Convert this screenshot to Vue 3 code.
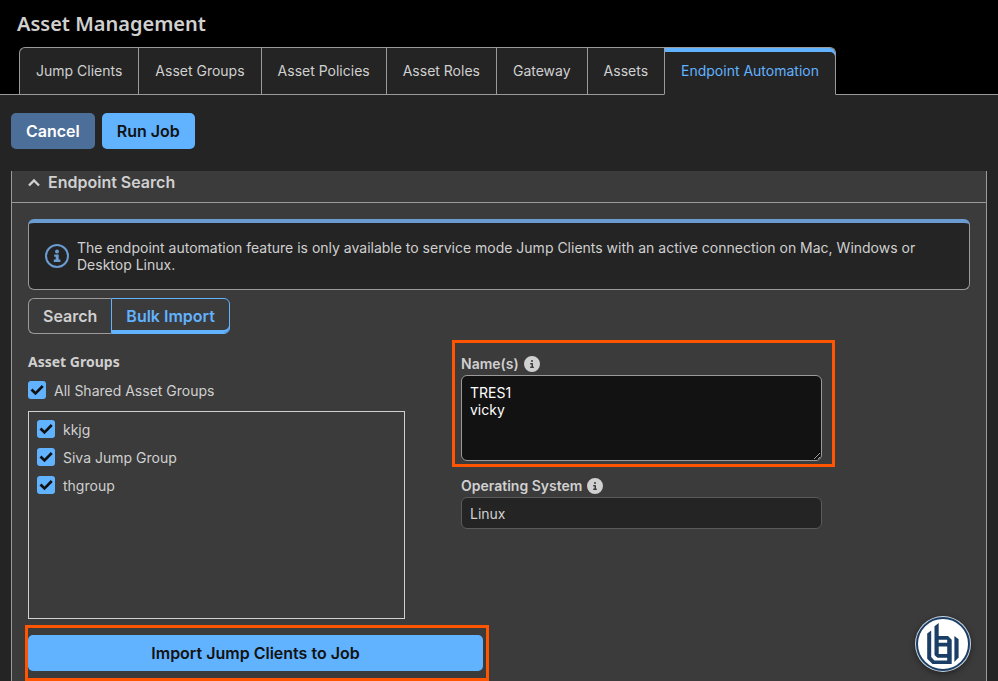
<script setup>
import { ref, computed } from 'vue'

const tabs = ['Jump Clients', 'Asset Groups', 'Asset Policies', 'Asset Roles', 'Gateway', 'Assets', 'Endpoint Automation']
const activeTab = ref('Endpoint Automation')
const mode = ref('Bulk Import')
const names = ref('TRES1\nvicky')
const os = ref('Linux')
const groups = ref([
  { id: 'g1', name: 'kkjg', checked: true },
  { id: 'g2', name: 'Siva Jump Group', checked: true },
  { id: 'g3', name: 'thgroup', checked: true },
])
const allChecked = computed({
  get: () => groups.value.every((g) => g.checked),
  set: (v) => groups.value.forEach((g) => { g.checked = v }),
})
const infoPath = 'M256 512A256 256 0 1 0 256 0a256 256 0 1 0 0 512zM216 336h24V272H216c-13.3 0-24-10.7-24-24s10.7-24 24-24h48c13.3 0 24 10.7 24 24v88h8c13.3 0 24 10.7 24 24s-10.7 24-24 24H216c-13.3 0-24-10.7-24-24s10.7-24 24-24zm40-208a32 32 0 1 1 0 64 32 32 0 1 1 0-64z'
</script>

<template>
  <div class="page">
    <header class="top">
      <h1>Asset Management</h1>
      <nav class="tabs">
        <a v-for="t in tabs" :key="t" href="#" class="tab" :class="{ active: t === activeTab }" @click.prevent="activeTab = t">{{ t }}</a>
      </nav>
    </header>

    <div class="toolbar">
      <button type="button" class="btn cancel">Cancel</button>
      <button type="button" class="btn primary">Run Job</button>
    </div>

    <main class="panel">
      <h2 class="panel-head">
        <svg class="chevron" viewBox="0 0 12 10" aria-hidden="true"><path d="M1 7.500l5-5 5 5" /></svg>
        Endpoint Search
      </h2>
      <div class="panel-body">
        <div class="alert">
          <svg class="alert-icon" viewBox="0 0 24 24" aria-hidden="true">
            <circle cx="12" cy="12" r="11" />
            <circle class="fill" cx="12" cy="7.6" r="2" />
            <path class="fill" d="M9.2 10.4h4.500v5.200h1.700V18H8.800v-2.400h1.900v-2.800H9.200z" />
          </svg>
          <p>The endpoint automation feature is only available to service mode Jump Clients with an active connection on Mac, Windows or Desktop Linux.</p>
        </div>

        <div class="segments">
          <button type="button" class="segment" :class="{ on: mode === 'Search' }" @click="mode = 'Search'">Search</button>
          <button type="button" class="segment" :class="{ on: mode === 'Bulk Import' }" @click="mode = 'Bulk Import'">Bulk Import</button>
        </div>

        <div class="columns">
          <section class="groups">
            <h3>Asset Groups</h3>
            <label class="check" for="all"><input id="all" v-model="allChecked" type="checkbox" />All Shared Asset Groups</label>
            <div class="list">
              <label v-for="g in groups" :key="g.id" class="check" :for="g.id"><input :id="g.id" v-model="g.checked" type="checkbox" />{{ g.name }}</label>
            </div>
          </section>

          <section class="fields">
            <div class="field highlighted">
              <label for="names">Name(s)<svg viewBox="0 0 512 512" aria-hidden="true"><path :d="infoPath" /></svg></label>
              <textarea id="names" v-model="names" spellcheck="false"></textarea>
            </div>
            <div class="field">
              <label for="os">Operating System<svg viewBox="0 0 512 512" aria-hidden="true"><path :d="infoPath" /></svg></label>
              <input id="os" v-model="os" type="text" />
            </div>
          </section>
        </div>

        <div class="import">
          <button type="button" class="btn primary">Import Jump Clients to Job</button>
        </div>
      </div>
    </main>

    <button type="button" class="badge" aria-label="Help">
      <svg viewBox="0 0 56 56" aria-hidden="true">
        <circle cx="28" cy="28" r="28" class="rim" />
        <circle cx="28" cy="28" r="26" class="ring" />
        <g class="mark">
          <path d="M12.200 17.500l4-3V41l3.200 3.500H34V48H17.500l-5.300-5.300z" />
          <path d="M19.500 10.300L23.700 7v34h-2.200l-2-2z" />
          <path d="M23 20h10l3.700 3.700V48h-4.500V23.800H23z" />
          <path d="M23 26.800h10v3.700H23zM23 38h10v3.700H22z" />
          <path d="M39.400 20l4.200 3.300v18.200l-4.200 4.500z" />
        </g>
      </svg>
    </button>
  </div>
</template>

<style>
body {
  margin: 0;
  background: #242424;
}
</style>

<style scoped>
* {
  box-sizing: border-box;
}
.page {
  display: flex;
  flex-direction: column;
  min-height: 100vh;
  background: #242424;
  color: #d0d0d0;
  font: 14px/17px Inter, sans-serif;
}
h1, h2, h3, p {
  margin: 0;
}
button, input, textarea {
  margin: 0;
  font: inherit;
  color: inherit;
}
button {
  cursor: pointer;
}
.top {
  flex: none;
  padding-top: 10px;
  background: #000;
  border-bottom: 1px solid #9a9a9a;
}
h1 {
  padding: 0 17px;
  font: 600 20px/28px "Noto Sans", sans-serif;
}
.tabs {
  display: flex;
  margin: 9px 19px -1px;
}
.tab {
  display: flex;
  align-items: center;
  height: 48px;
  padding: 0 16px 2px;
  border: 1px solid #9a9a9a;
  border-right-width: 0;
  background: #242424;
  color: inherit;
  text-decoration: none;
  white-space: nowrap;
}
.tab:first-child {
  border-top-left-radius: 6px;
}
.tab:last-child {
  border-right-width: 1px;
  border-top-right-radius: 6px;
}
.tab.active {
  border-bottom-color: #242424;
  box-shadow: inset 0 4px #61b2ff;
  color: #61b2ff;
}
.toolbar {
  display: flex;
  flex: none;
  gap: 7px;
  padding: 18px 11px 22px;
}
.btn {
  height: 36px;
  padding: 0 15px;
  border: 0;
  border-radius: 5px;
  font-size: 16px;
  font-weight: 600;
}
.cancel {
  background: #4c6f99;
  color: #fff;
}
.primary {
  background: #61b2ff;
  color: #121212;
}
.panel {
  flex: 1 0 auto;
  margin: 0 11px;
  border: solid #9a9a9a;
  border-width: 0 1px;
  background: #3b3b3b;
}
.panel-head {
  display: flex;
  align-items: center;
  gap: 8px;
  height: 32px;
  padding: 0 16px 8px;
  border-bottom: 1px solid #9a9a9a;
  font-size: 16px;
  font-weight: 600;
}
.chevron {
  width: 12px;
  height: 10px;
  fill: none;
  stroke: currentColor;
  stroke-width: 2.4;
}
.panel-body {
  padding: 16px 16px 10px;
}
.alert {
  display: flex;
  align-items: center;
  gap: 8px;
  min-height: 71px;
  padding: 0 16px;
  border: 1px solid #9a9a9a;
  border-top: 4px solid #6a9bd1;
  border-radius: 6px;
  background: #242424;
}
.alert-icon {
  flex: none;
  width: 24px;
  height: 24px;
  fill: none;
  stroke: #6a9bd1;
  stroke-width: 2;
}
.alert-icon .fill {
  fill: #6a9bd1;
  stroke: none;
}
.segments {
  display: flex;
  margin-top: 8px;
}
.segment {
  height: 36px;
  padding: 0 14px;
  border: 1px solid #9a9a9a;
  background: none;
  font-size: 16px;
  font-weight: 600;
}
.segment:first-child {
  border-right: 0;
  border-radius: 6px 0 0 6px;
}
.segment:last-child {
  border-radius: 0 6px 6px 0;
}
.segment.on {
  border-color: #61b2ff;
  box-shadow: inset 0 -3px #61b2ff;
  color: #61b2ff;
}
.columns {
  display: grid;
  grid-template-columns: 377fr 361fr 92fr;
  column-gap: 56px;
  padding-top: 18px;
}
h3 {
  font: 700 14px/20px "Noto Sans", sans-serif;
}
.check {
  display: flex;
  align-items: center;
  gap: 8px;
  height: 18px;
}
.groups > .check {
  margin: 9px 0 12px;
}
.check input {
  appearance: none;
  display: grid;
  flex: none;
  width: 18px;
  height: 18px;
  border-radius: 3px;
  background: #d0d0d0;
}
.check input:checked {
  background: #61b2ff;
}
.check input:checked::before {
  content: "";
  background: #121212;
  clip-path: path("M2.500 9.500 4.500 7.500 7.500 10.500 13.800 4 15.700 5.900 7.500 14.200z");
}
.list {
  display: flex;
  flex-direction: column;
  gap: 10px;
  height: 208px;
  padding: 8px;
  border: 1px solid #d0d0d0;
  overflow: auto;
}
.fields {
  display: flex;
  flex-direction: column;
  gap: 17px;
  padding-top: 4px;
}
.field {
  position: relative;
}
.field label {
  display: flex;
  gap: 5px;
  height: 16px;
  margin-bottom: 3px;
  font-weight: 600;
  line-height: 15px;
}
.field label svg {
  width: 16px;
  height: 16px;
  fill: currentColor;
}
textarea, .field input {
  display: block;
  width: 100%;
  padding: 8px;
  border: 1px solid #9a9a9a;
  border-radius: 6px;
  outline: 0;
}
textarea {
  height: 86px;
  background: #121212;
  color: #fff;
  resize: vertical;
}
.field input {
  height: 32px;
  border-color: #5a5a5a;
  background: #242424;
}
.highlighted::after {
  content: "";
  position: absolute;
  inset: -16px -13px -6px -9px;
  border: 3px solid #ff5500;
  pointer-events: none;
}
.import {
  position: relative;
  max-width: 455px;
  margin-top: 16px;
}
.import .btn {
  display: block;
  width: 100%;
}
.import::after {
  content: "";
  position: absolute;
  inset: -10px -6px -10px -3px;
  border: 3px solid #ff5500;
  pointer-events: none;
}
.badge {
  position: fixed;
  right: 27px;
  bottom: 9px;
  width: 56px;
  height: 56px;
  padding: 0;
  border: 0;
  border-radius: 50%;
  background: none;
  box-shadow: 0 2px 6px rgba(0, 0, 0, 0.4);
}
.badge svg {
  display: block;
}
.rim {
  fill: #c9d3de;
}
.ring {
  fill: #fff;
  stroke: #1a3e66;
  stroke-width: 2;
}
.mark {
  fill: #1a3e66;
}
</style>
